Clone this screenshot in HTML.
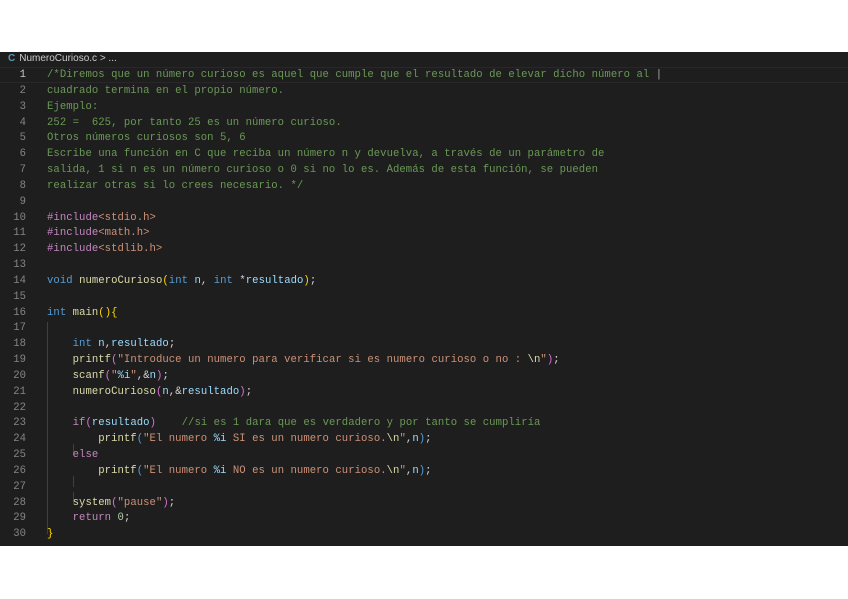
<!DOCTYPE html>
<html><head><meta charset="utf-8"><style>
html,body{margin:0;padding:0;background:#fff;width:848px;height:599px;overflow:hidden}
#ed{position:absolute;left:0;top:52px;width:848px;height:494px;background:#1e1e1e;overflow:hidden}
#bc{position:absolute;left:8px;top:0;height:14px;font:10px "Liberation Sans",sans-serif;color:#ccc;line-height:14px}
#bc b{color:#519aba;font-weight:bold;margin-right:4px}
#cur{position:absolute;left:0;top:15px;width:848px;height:16px;border-top:1px solid #282828;border-bottom:1px solid #282828;box-sizing:border-box}
.ln{position:absolute;left:0;width:26px;text-align:right;color:#858585;font:10.6px "Liberation Mono",monospace}
.cd{position:absolute;left:47px;white-space:pre;font:10.6px "Liberation Mono",monospace;color:#d4d4d4;letter-spacing:0.05px}
.c{color:#6a9955}.k{color:#569cd6}.p{color:#c586c0}.f{color:#dcdcaa}.s{color:#ce9178}.v{color:#9cdcfe}.y{color:#ffd700}.n{color:#b5cea8}.o{color:#da70d6}
.g{position:absolute;width:1px;background:#404040}
</style></head><body>
<div id="ed">
<div id="bc"><b>C</b>NumeroCurioso.c &gt; ...</div>
<div id="cur"></div>
<div class="g" style="left:47px;top:270px;height:212px"></div>
<div class="g" style="left:73px;top:392px;height:11px"></div>
<div class="g" style="left:73px;top:424px;height:11px"></div>
<div class="g" style="left:73px;top:440px;height:11px"></div>
</div>
<div id="src" style="position:absolute;left:0;top:54px">
<div class="ln" style="top:15px;color:#c6c6c6">1</div><div class="cd c" style="top:15px">/*Diremos que un número curioso es aquel que cumple que el resultado de elevar dicho número al <span style="color:#aaa">|</span></div>
<div class="ln" style="top:31px">2</div><div class="cd c" style="top:31px">cuadrado termina en el propio número.</div>
<div class="ln" style="top:47px">3</div><div class="cd c" style="top:47px">Ejemplo:</div>
<div class="ln" style="top:63px">4</div><div class="cd c" style="top:63px">252 =  625, por tanto 25 es un número curioso.</div>
<div class="ln" style="top:78px">5</div><div class="cd c" style="top:78px">Otros números curiosos son 5, 6</div>
<div class="ln" style="top:94px">6</div><div class="cd c" style="top:94px">Escribe una función en C que reciba un número n y devuelva, a través de un parámetro de</div>
<div class="ln" style="top:110px">7</div><div class="cd c" style="top:110px">salida, 1 si n es un número curioso o 0 si no lo es. Además de esta función, se pueden</div>
<div class="ln" style="top:126px">8</div><div class="cd c" style="top:126px">realizar otras si lo crees necesario. */</div>
<div class="ln" style="top:142px">9</div>
<div class="ln" style="top:158px">10</div><div class="cd" style="top:158px"><span class="p">#include</span><span class="s">&lt;stdio.h&gt;</span></div>
<div class="ln" style="top:173px">11</div><div class="cd" style="top:173px"><span class="p">#include</span><span class="s">&lt;math.h&gt;</span></div>
<div class="ln" style="top:189px">12</div><div class="cd" style="top:189px"><span class="p">#include</span><span class="s">&lt;stdlib.h&gt;</span></div>
<div class="ln" style="top:205px">13</div>
<div class="ln" style="top:221px">14</div><div class="cd" style="top:221px"><span class="k">void</span> <span class="f">numeroCurioso</span><span class="y">(</span><span class="k">int</span> <span class="v">n</span>, <span class="k">int</span> *<span class="v">resultado</span><span class="y">)</span>;</div>
<div class="ln" style="top:237px">15</div>
<div class="ln" style="top:253px">16</div><div class="cd" style="top:253px"><span class="k">int</span> <span class="f">main</span><span class="y">(){</span></div>
<div class="ln" style="top:268px">17</div>
<div class="ln" style="top:284px">18</div><div class="cd" style="top:284px">    <span class="k">int</span> <span class="v">n</span>,<span class="v">resultado</span>;</div>
<div class="ln" style="top:300px">19</div><div class="cd" style="top:300px">    <span class="f">printf</span><span class="o">(</span><span class="s">"Introduce un numero para verificar si es numero curioso o no : </span><span class="f">\n</span><span class="s">"</span><span class="o">)</span>;</div>
<div class="ln" style="top:316px">20</div><div class="cd" style="top:316px">    <span class="f">scanf</span><span class="o">(</span><span class="s">"</span><span class="v">%i</span><span class="s">"</span>,&amp;<span class="v">n</span><span class="o">)</span>;</div>
<div class="ln" style="top:332px">21</div><div class="cd" style="top:332px">    <span class="f">numeroCurioso</span><span class="o">(</span><span class="v">n</span>,&amp;<span class="v">resultado</span><span class="o">)</span>;</div>
<div class="ln" style="top:348px">22</div>
<div class="ln" style="top:363px">23</div><div class="cd" style="top:363px">    <span class="p">if</span><span class="o">(</span><span class="v">resultado</span><span class="o">)</span>    <span class="c">//si es 1 dara que es verdadero y por tanto se cumpliría</span></div>
<div class="ln" style="top:379px">24</div><div class="cd" style="top:379px">        <span class="f">printf</span><span class="k">(</span><span class="s">"El numero </span><span class="v">%i</span><span class="s"> SI es un numero curioso.</span><span class="f">\n</span><span class="s">"</span>,<span class="v">n</span><span class="k">)</span>;</div>
<div class="ln" style="top:395px">25</div><div class="cd" style="top:395px">    <span class="p">else</span></div>
<div class="ln" style="top:411px">26</div><div class="cd" style="top:411px">        <span class="f">printf</span><span class="k">(</span><span class="s">"El numero </span><span class="v">%i</span><span class="s"> NO es un numero curioso.</span><span class="f">\n</span><span class="s">"</span>,<span class="v">n</span><span class="k">)</span>;</div>
<div class="ln" style="top:427px">27</div>
<div class="ln" style="top:443px">28</div><div class="cd" style="top:443px">    <span class="f">system</span><span class="o">(</span><span class="s">"pause"</span><span class="o">)</span>;</div>
<div class="ln" style="top:458px">29</div><div class="cd" style="top:458px">    <span class="p">return</span> <span class="n">0</span>;</div>
<div class="ln" style="top:474px">30</div><div class="cd" style="top:474px"><span class="y">}</span></div>
</div>
</body></html>
